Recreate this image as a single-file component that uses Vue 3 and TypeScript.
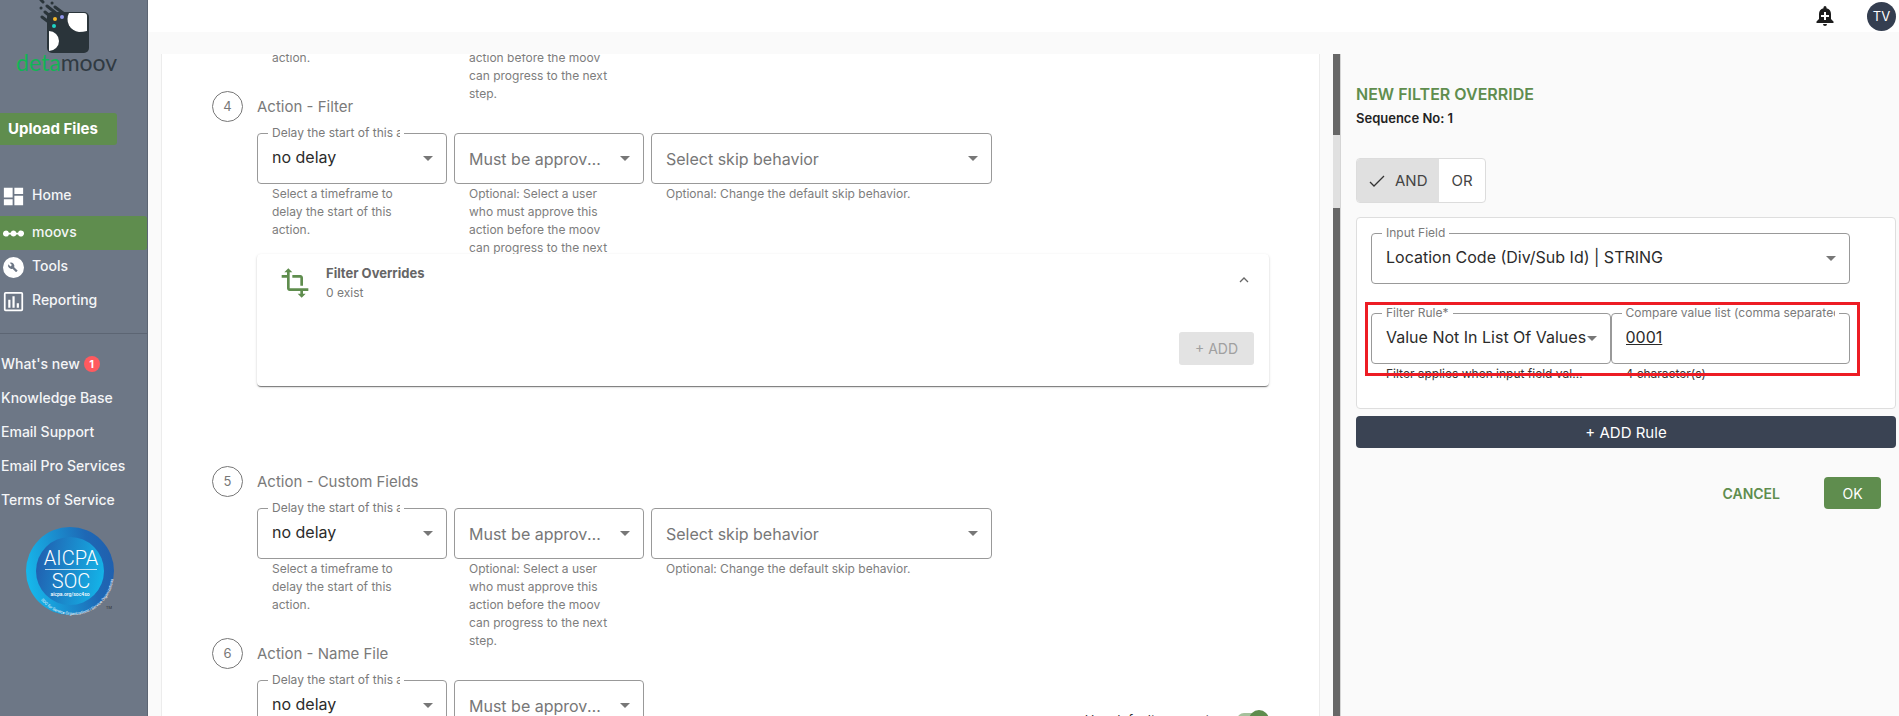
<script setup lang="ts">
import { ref } from 'vue'

interface Step {
  no: number
  title: string
  skip: boolean
  overrides: boolean
}

const steps: Step[] = [
  { no: 4, title: 'Action - Filter', skip: true, overrides: true },
  { no: 5, title: 'Action - Custom Fields', skip: true, overrides: false },
  { no: 6, title: 'Action - Name File', skip: false, overrides: false },
]

const nav = [
  { id: 'home', label: 'Home' },
  { id: 'moovs', label: 'moovs' },
  { id: 'tools', label: 'Tools' },
  { id: 'reporting', label: 'Reporting' },
]

const links = ['Knowledge Base', 'Email Support', 'Email Pro Services', 'Terms of Service']

const delayHint = 'Select a timeframe to delay the start of this action.'
const approveHint =
  'Optional: Select a user who must approve this action before the moov can progress to the next step.'

const combinator = ref<'AND' | 'OR'>('AND')
const compareValue = ref('0001')
const useDefaults = ref(true)
</script>

<template>
  <div class="app">
    <aside class="sidebar">
      <svg class="logo" viewBox="0 0 147 80" aria-label="detamoov">
        <rect x="47" y="12" width="42" height="41" rx="5" fill="#2a343a" />
        <path d="M69 13h15q3 0 3 3v15q-4 1-8 1a13 13 0 0 1-10-19z" fill="#fff" />
        <path d="M49 31a10 10 0 0 1 0 20z" fill="#fff" />
        <path
          d="M42 17l12 9M45 12l11 9M47 6l15 12M41 0l2 2M55 7l8 6M52 3h.1M41 8h.1"
          stroke="#2a343a"
          stroke-width="3"
          stroke-linecap="round"
        />
        <circle cx="54" cy="26" r="2" fill="#1fd3c4" />
        <circle cx="55" cy="19" r="2" fill="#f3b62b" />
        <circle cx="62" cy="17" r="2" fill="#8f94ea" />
        <text x="16" y="71" class="logo-text"><tspan fill="#12b455">deta</tspan><tspan fill="#303a42">moov</tspan></text>
      </svg>
      <button class="upload" type="button">Upload Files</button>
      <nav class="nav">
        <a v-for="n in nav" :key="n.id" href="#" :class="['nav-item', { active: n.id === 'moovs' }]">
          <svg viewBox="0 0 24 24" class="nav-icon" fill="#fff">
            <path v-if="n.id === 'home'" d="M1 2h10v11H1zM13 2h10v7H13zM13 11h10v11H13zM1 15h10v7H1z" />
            <path
              v-else-if="n.id === 'moovs'"
              d="M3.500 8.500A3.500 3.500 0 0 1 6.800 11h1.900a3.500 3.500 0 0 1 6.600 0h1.900a3.500 3.500 0 1 1 0 2h-1.900a3.500 3.500 0 0 1-6.600 0H6.800A3.500 3.500 0 1 1 3.500 8.500z"
            />
            <path
              v-else-if="n.id === 'tools'"
              fill-rule="evenodd"
              d="M12 0a12 12 0 1 0 0 24 12 12 0 0 0 0-24zM16.900 15.500l-1.400 1.400a.8.8 0 0 1-1.100 0l-3.500-3.500a3.900 3.900 0 0 1-4.900-5l2.500 2.500 1.700-1.700L7.700 6.700a3.900 3.900 0 0 1 5.100 4.900l3.500 3.500q.5.300.6.400z"
            />
            <path
              v-else
              fill-rule="evenodd"
              d="M3 1h18a2 2 0 0 1 2 2v18a2 2 0 0 1-2 2H3a2 2 0 0 1-2-2V3a2 2 0 0 1 2-2zM3 3v18h18V3zM6 10h2.500v9H6zM10.800 6h2.500v13h-2.500zM15.700 14h2.500v5h-2.500z"
            />
          </svg>
          <span>{{ n.label }}</span>
        </a>
      </nav>
      <div class="links">
        <a href="#">What's new <span class="badge">1</span></a>
        <a v-for="l in links" :key="l" href="#">{{ l }}</a>
      </div>
      <svg class="seal" viewBox="0 0 92 90" aria-label="AICPA SOC">
        <defs>
          <linearGradient id="outer" x1="0" x2="1" y1=".6" y2=".4">
            <stop offset="0" stop-color="#16b9ec" />
            <stop offset=".75" stop-color="#1e68b5" />
            <stop offset="1" stop-color="#2060ae" />
          </linearGradient>
          <linearGradient id="inner" x1="0" x2="1" y1=".4" y2=".6">
            <stop offset="0" stop-color="#2160b0" />
            <stop offset="1" stop-color="#14b4e8" />
          </linearGradient>
          <path id="arc" d="M15 73A41 41 0 0 0 84 30" />
        </defs>
        <circle cx="44" cy="44" r="44" fill="url(#outer)" />
        <circle cx="44" cy="44" r="34" fill="url(#inner)" />
        <g fill="#fff" text-anchor="middle">
          <text x="45" y="38" class="seal-big">AICPA</text>
          <rect x="19" y="42" width="52" height="1" opacity=".7" />
          <text x="45" y="61" class="seal-big">SOC</text>
          <text x="44" y="69" class="seal-url">aicpa.org/soc4so</text>
        </g>
        <text class="seal-arc" fill="#fff"><textPath href="#arc">SOC for Service Organizations | Service Organizations</textPath></text>
        <text x="80" y="82" class="seal-arc" fill="#333">TM</text>
      </svg>
    </aside>

    <div class="page">
      <header class="topbar">
        <button class="bell" type="button" aria-label="Add alert">
          <svg viewBox="0 0 24 24" width="24" height="24">
            <path
              fill="#1d1d1d"
              fill-rule="evenodd"
              d="M10 20h4a2 2 0 1 1-4 0zM12 2a1.500 1.500 0 0 1 1.500 1.500v.7A6 6 0 0 1 18 10v5l2.500 2.500V19h-17v-1.500L6 15v-5a6 6 0 0 1 4.500-5.800v-.7A1.500 1.500 0 0 1 12 2zM11 8v3H8v2h3v3h2v-3h3v-2h-3V8z"
            />
          </svg>
        </button>
        <button class="avatar" type="button">TV</button>
      </header>

      <div class="workspace">
        <main class="card">
          <div class="tail">
            <div class="fields">
              <p class="hint">{{ delayHint }}</p>
              <p class="hint">{{ approveHint }}</p>
            </div>
          </div>

          <section v-for="s in steps" :key="s.no" class="step">
            <div class="circle">{{ s.no }}</div>
            <div class="body">
              <h3 class="step-title">{{ s.title }}</h3>
              <div class="fields fields-row">
                <div>
                  <div class="field">
                    <label :for="'delay' + s.no">Delay the start of this action</label>
                    <select :id="'delay' + s.no" class="filled"><option>no delay</option></select>
                  </div>
                  <p class="hint">{{ delayHint }}</p>
                </div>
                <div>
                  <div class="field">
                    <select aria-label="Must be approved by"><option>Must be approved by</option></select>
                  </div>
                  <p class="hint">{{ approveHint }}</p>
                </div>
                <div v-if="s.skip">
                  <div class="field">
                    <select aria-label="Select skip behavior"><option>Select skip behavior</option></select>
                  </div>
                  <p class="hint">Optional: Change the default skip behavior.</p>
                </div>
                <label v-if="!s.skip" class="defaults">
                  <span>Use default parameters</span>
                  <input v-model="useDefaults" type="checkbox" />
                </label>
              </div>
              <div v-if="s.overrides" class="overrides">
                <div class="ov-head">
                  <svg viewBox="0 0 24 24" width="32" height="32" fill="#5f8d4e">
                    <path d="M22 18v-2H8V4h2L7 1 4 4h2v2H2v2h4v8c0 1.100.9 2 2 2h8v2h-2l3 3 3-3h-2v-2h4zM10 8h6v6h2V8c0-1.100-.9-2-2-2h-6v2z" />
                  </svg>
                  <div class="ov-text">
                    <strong>Filter Overrides</strong>
                    <span>0 exist</span>
                  </div>
                  <button class="chevron" type="button" aria-label="Collapse">
                    <svg viewBox="0 0 10 6" width="10" height="6">
                      <path d="M1 5l4-4 4 4" fill="none" stroke="#666" stroke-width="1.300" />
                    </svg>
                  </button>
                </div>
                <button class="add" type="button" disabled>+ ADD</button>
              </div>
            </div>
          </section>
        </main>

        <div class="track"><div class="thumb"></div></div>

        <aside class="drawer">
          <h2>NEW FILTER OVERRIDE</h2>
          <p class="seq">Sequence No: 1</p>
          <div class="toggle" role="group" aria-label="Combine rules">
            <button type="button" :class="{ on: combinator === 'AND' }" @click="combinator = 'AND'">
              <svg v-if="combinator === 'AND'" viewBox="0 0 16 14" width="16" height="14">
                <path d="M1 8l4 4L15 2" fill="none" stroke="#333" stroke-width="1.300" />
              </svg>
              AND
            </button>
            <button type="button" :class="{ on: combinator === 'OR' }" @click="combinator = 'OR'">OR</button>
          </div>

          <div class="rule-card">
            <div class="field">
              <label for="input-field">Input Field</label>
              <select id="input-field" class="filled"><option>Location Code (Div/Sub Id) | STRING</option></select>
            </div>
            <div class="rule-row">
              <div>
                <div class="field">
                  <label for="filter-rule">Filter Rule*</label>
                  <select id="filter-rule" class="filled tight"><option>Value Not In List Of Values</option></select>
                </div>
                <p class="hint dark">Filter applies when input field value is not listed</p>
              </div>
              <div>
                <div class="field no-arrow">
                  <label for="compare">Compare value list (comma separated)</label>
                  <input id="compare" v-model="compareValue" type="text" />
                </div>
                <p class="hint dark">{{ compareValue.length }} character(s)</p>
              </div>
              <div class="highlight"></div>
            </div>
          </div>

          <button class="add-rule" type="button">+ ADD Rule</button>
          <div class="actions">
            <button class="cancel" type="button">CANCEL</button>
            <button class="ok" type="button">OK</button>
          </div>
        </aside>
      </div>
    </div>
  </div>
</template>

<style>
body {
  margin: 0;
  overflow: hidden;
}
</style>

<style scoped>
.app {
  display: flex;
  height: 100vh;
  overflow: hidden;
  background: #fafafa;
  color: #222;
  font-family: Inter, 'Liberation Sans', sans-serif;
  font-size: 14px;
}
.app * {
  box-sizing: border-box;
}
button,
select,
input {
  font: inherit;
}
button {
  border: 0;
  padding: 0;
  background: none;
  cursor: pointer;
}
a {
  color: inherit;
  text-decoration: none;
}
h2,
h3,
p {
  margin: 0;
}

.sidebar {
  flex: none;
  width: 148px;
  background: #6d7786;
  border-right: 1px solid #5c6573;
  color: #f4f5f7;
  display: flex;
  flex-direction: column;
  align-items: stretch;
}
.logo {
  display: block;
  height: 80px;
  margin-bottom: 33px;
}
.logo-text {
  font: 23px Lato, sans-serif;
}
.upload {
  width: 117px;
  height: 32px;
  padding: 0 0 1px 8px;
  text-align: left;
  background: #5f8d4e;
  border-radius: 0 3px 3px 0;
  color: #fff;
  font-size: 15px;
  font-weight: 700;
}
.nav {
  margin-top: 34px;
  padding-bottom: 15px;
  border-bottom: 1px solid #5c6573;
}
.nav-item {
  display: flex;
  align-items: center;
  gap: 8px;
  height: 34px;
  padding-left: 3px;
  border-radius: 0 3px 3px 0;
  font-weight: 500;
}
.nav-item span {
  padding-bottom: 3px;
}
.nav-item.active {
  margin-top: 3px;
  background: #5f8d4e;
}
.nav-icon {
  width: 21px;
  height: 21px;
}
.links {
  display: flex;
  flex-direction: column;
  padding-top: 13px;
}
.links a {
  height: 34px;
  line-height: 34px;
  padding-left: 1px;
  font-weight: 500;
  white-space: nowrap;
}
.badge {
  display: inline-block;
  width: 16px;
  height: 16px;
  border-radius: 50%;
  background: #ff5a5f;
  color: #fff;
  font-size: 11px;
  font-weight: 700;
  line-height: 16px;
  text-align: center;
  vertical-align: 1px;
}
.seal {
  width: 92px;
  height: 90px;
  margin: 10px 0 0 26px;
}
.seal-big {
  font: 300 20px Roboto, sans-serif;
}
.seal-url {
  font: 500 5px Roboto, sans-serif;
}
.seal-arc {
  font: 4px Roboto, sans-serif;
}

.page {
  flex: 1;
  min-width: 0;
  display: flex;
  flex-direction: column;
}
.topbar {
  height: 32px;
  background: #fff;
  display: flex;
  align-items: center;
  justify-content: flex-end;
  gap: 30px;
  padding-right: 3px;
}
.bell {
  height: 24px;
}
.avatar {
  width: 29px;
  height: 29px;
  border-radius: 50%;
  background: #343e50;
  color: #fff;
  font-size: 13px;
}
.workspace {
  flex: 1;
  min-height: 0;
  display: flex;
  padding: 22px 0 0 13px;
}
.card {
  flex: 1;
  min-width: 0;
  overflow: hidden;
  background: #fff;
  border: solid #ececec;
  border-width: 0 1px;
  padding: 0 50px;
}

.tail {
  height: 37px;
  padding-left: 45px;
  display: flex;
  align-items: flex-end;
}
.tail .fields {
  width: 100%;
  margin-bottom: -12px;
}
.fields {
  display: grid;
  grid-template-columns: 190fr 190fr 341fr 270fr;
  column-gap: 7px;
  align-items: start;
}
.step {
  display: flex;
  gap: 14px;
}
.circle {
  flex: none;
  width: 31px;
  height: 31px;
  border: 1px solid #777;
  border-radius: 50%;
  color: #777;
  font-size: 13px;
  line-height: 29px;
  text-align: center;
}
.body {
  flex: 1;
  min-width: 0;
  padding-bottom: 9px;
}
.step-title {
  margin-bottom: 11px;
  color: #7a7a7a;
  font-size: 15px;
  font-weight: 400;
  line-height: 31px;
}
.fields-row {
  height: 121px;
}
.field {
  position: relative;
  height: 51px;
}
.field label {
  position: absolute;
  top: -8px;
  left: 11px;
  max-width: calc(100% - 54px);
  padding-left: 4px;
  border-right: 4px solid #fff;
  overflow: hidden;
  background: #fff;
  color: #7a7a7a;
  font-size: 12px;
  line-height: 16px;
  white-space: nowrap;
  pointer-events: none;
}
.field.no-arrow label {
  max-width: calc(100% - 22px);
}
.field select,
.field input {
  display: block;
  width: 100%;
  height: 100%;
  appearance: none;
  border: 1px solid #999;
  border-radius: 4px;
  background: #fff;
  padding: 0 40px 0 14px;
  color: #777;
  font-size: 16px;
  outline: 0;
  overflow: hidden;
  text-overflow: ellipsis;
  white-space: nowrap;
}
.field select.filled,
.field input {
  padding-bottom: 3px;
  color: #2b2b2b;
}
.field select.tight {
  padding-right: 18px;
}
.field input {
  padding-right: 14px;
  text-decoration: underline;
}
.field::after {
  content: '';
  position: absolute;
  top: 23px;
  right: 14px;
  border: 5px solid transparent;
  border-top-color: #777;
  border-bottom-width: 0;
  pointer-events: none;
}
.field.no-arrow::after {
  display: none;
}
.hint {
  margin-top: 1px;
  padding: 0 30px 0 15px;
  color: #7d7d7d;
  font-size: 12px;
  line-height: 18px;
}
.hint.dark {
  margin-left: 15px;
  margin-right: 26px;
  padding: 0;
  color: #333;
  overflow: hidden;
  text-overflow: ellipsis;
  white-space: nowrap;
}
.defaults {
  grid-column: 3 / 5;
  display: flex;
  align-items: center;
  justify-content: flex-end;
  gap: 8px;
  margin-top: 30px;
  color: #333;
  font-size: 13px;
  line-height: 20px;
}
.defaults input {
  appearance: none;
  position: relative;
  width: 32px;
  height: 14px;
  margin: 0;
  border-radius: 7px;
  background: #a5c09b;
}
.defaults input::after {
  content: '';
  position: absolute;
  top: -3px;
  right: 0;
  width: 20px;
  height: 20px;
  border-radius: 50%;
  background: #5f8d4e;
}

.overrides {
  position: relative;
  height: 132px;
  margin-bottom: 71px;
  border-radius: 4px;
  background: #fff;
  box-shadow: 0 2px 1px -1px rgba(0, 0, 0, 0.35), 0 1px 1px rgba(0, 0, 0, 0.2), 0 1px 3px rgba(0, 0, 0, 0.14);
  display: flex;
  flex-direction: column;
  justify-content: space-between;
  padding: 9px 15px 21px 22px;
}
.ov-head {
  display: flex;
  gap: 15px;
}
.ov-head > svg {
  margin-top: 4px;
}
.ov-text {
  flex: 1;
  display: flex;
  flex-direction: column;
  color: #666;
  font-size: 13px;
  line-height: 20px;
}
.ov-text span {
  font-size: 12px;
  color: #7a7a7a;
}
.chevron {
  width: 20px;
  height: 29px;
}
.add {
  align-self: flex-end;
  width: 75px;
  height: 33px;
  border-radius: 3px;
  background: #e3e3e3;
  color: #a0a0a0;
  font-size: 14px;
}

.track {
  flex: none;
  width: 7px;
  margin-left: 13px;
  padding-top: 81px;
  background: #676767;
}
.thumb {
  height: 73px;
  background: #e0e0e0;
}
.drawer {
  flex: none;
  width: 33%;
  max-width: 559px;
  border-left: 1px solid #d5d5d5;
  padding: 28px 3px 0 15px;
}
.drawer h2 {
  color: #5f8d4e;
  font-size: 16px;
  font-weight: 600;
  line-height: 24px;
}
.seq {
  font-size: 13px;
  font-weight: 600;
  line-height: 24px;
}
.toggle {
  display: inline-flex;
  height: 45px;
  margin: 28px 0 14px;
  overflow: hidden;
  border: 1px solid #dcdcdc;
  border-radius: 4px;
  background: #fff;
  vertical-align: top;
}
.toggle button {
  display: flex;
  align-items: center;
  gap: 10px;
  padding: 0 12px;
  color: #444;
  font-size: 15px;
}
.toggle .on {
  background: #e0e0e0;
}
.rule-card {
  padding: 15px 45px 25px 14px;
  border: 1px solid #dedede;
  border-radius: 4px;
  background: #fff;
}
.rule-row {
  position: relative;
  display: grid;
  grid-template-columns: 1fr 1fr;
  margin-top: 29px;
}
.rule-row > div {
  min-width: 0;
}
.highlight {
  position: absolute;
  inset: -11px -10px 7px -6px;
  border: 3px solid #ed1c24;
  pointer-events: none;
}
.add-rule {
  display: block;
  width: 100%;
  height: 32px;
  margin-top: 7px;
  border-radius: 4px;
  background: #3a4353;
  color: #fff;
  font-size: 15px;
}
.actions {
  display: flex;
  justify-content: flex-end;
  gap: 44px;
  padding: 29px 15px 0 0;
}
.cancel {
  color: #5f8d4e;
  font-weight: 600;
}
.ok {
  width: 57px;
  height: 32px;
  border-radius: 4px;
  background: #5f8d4e;
  color: #fff;
}
</style>
